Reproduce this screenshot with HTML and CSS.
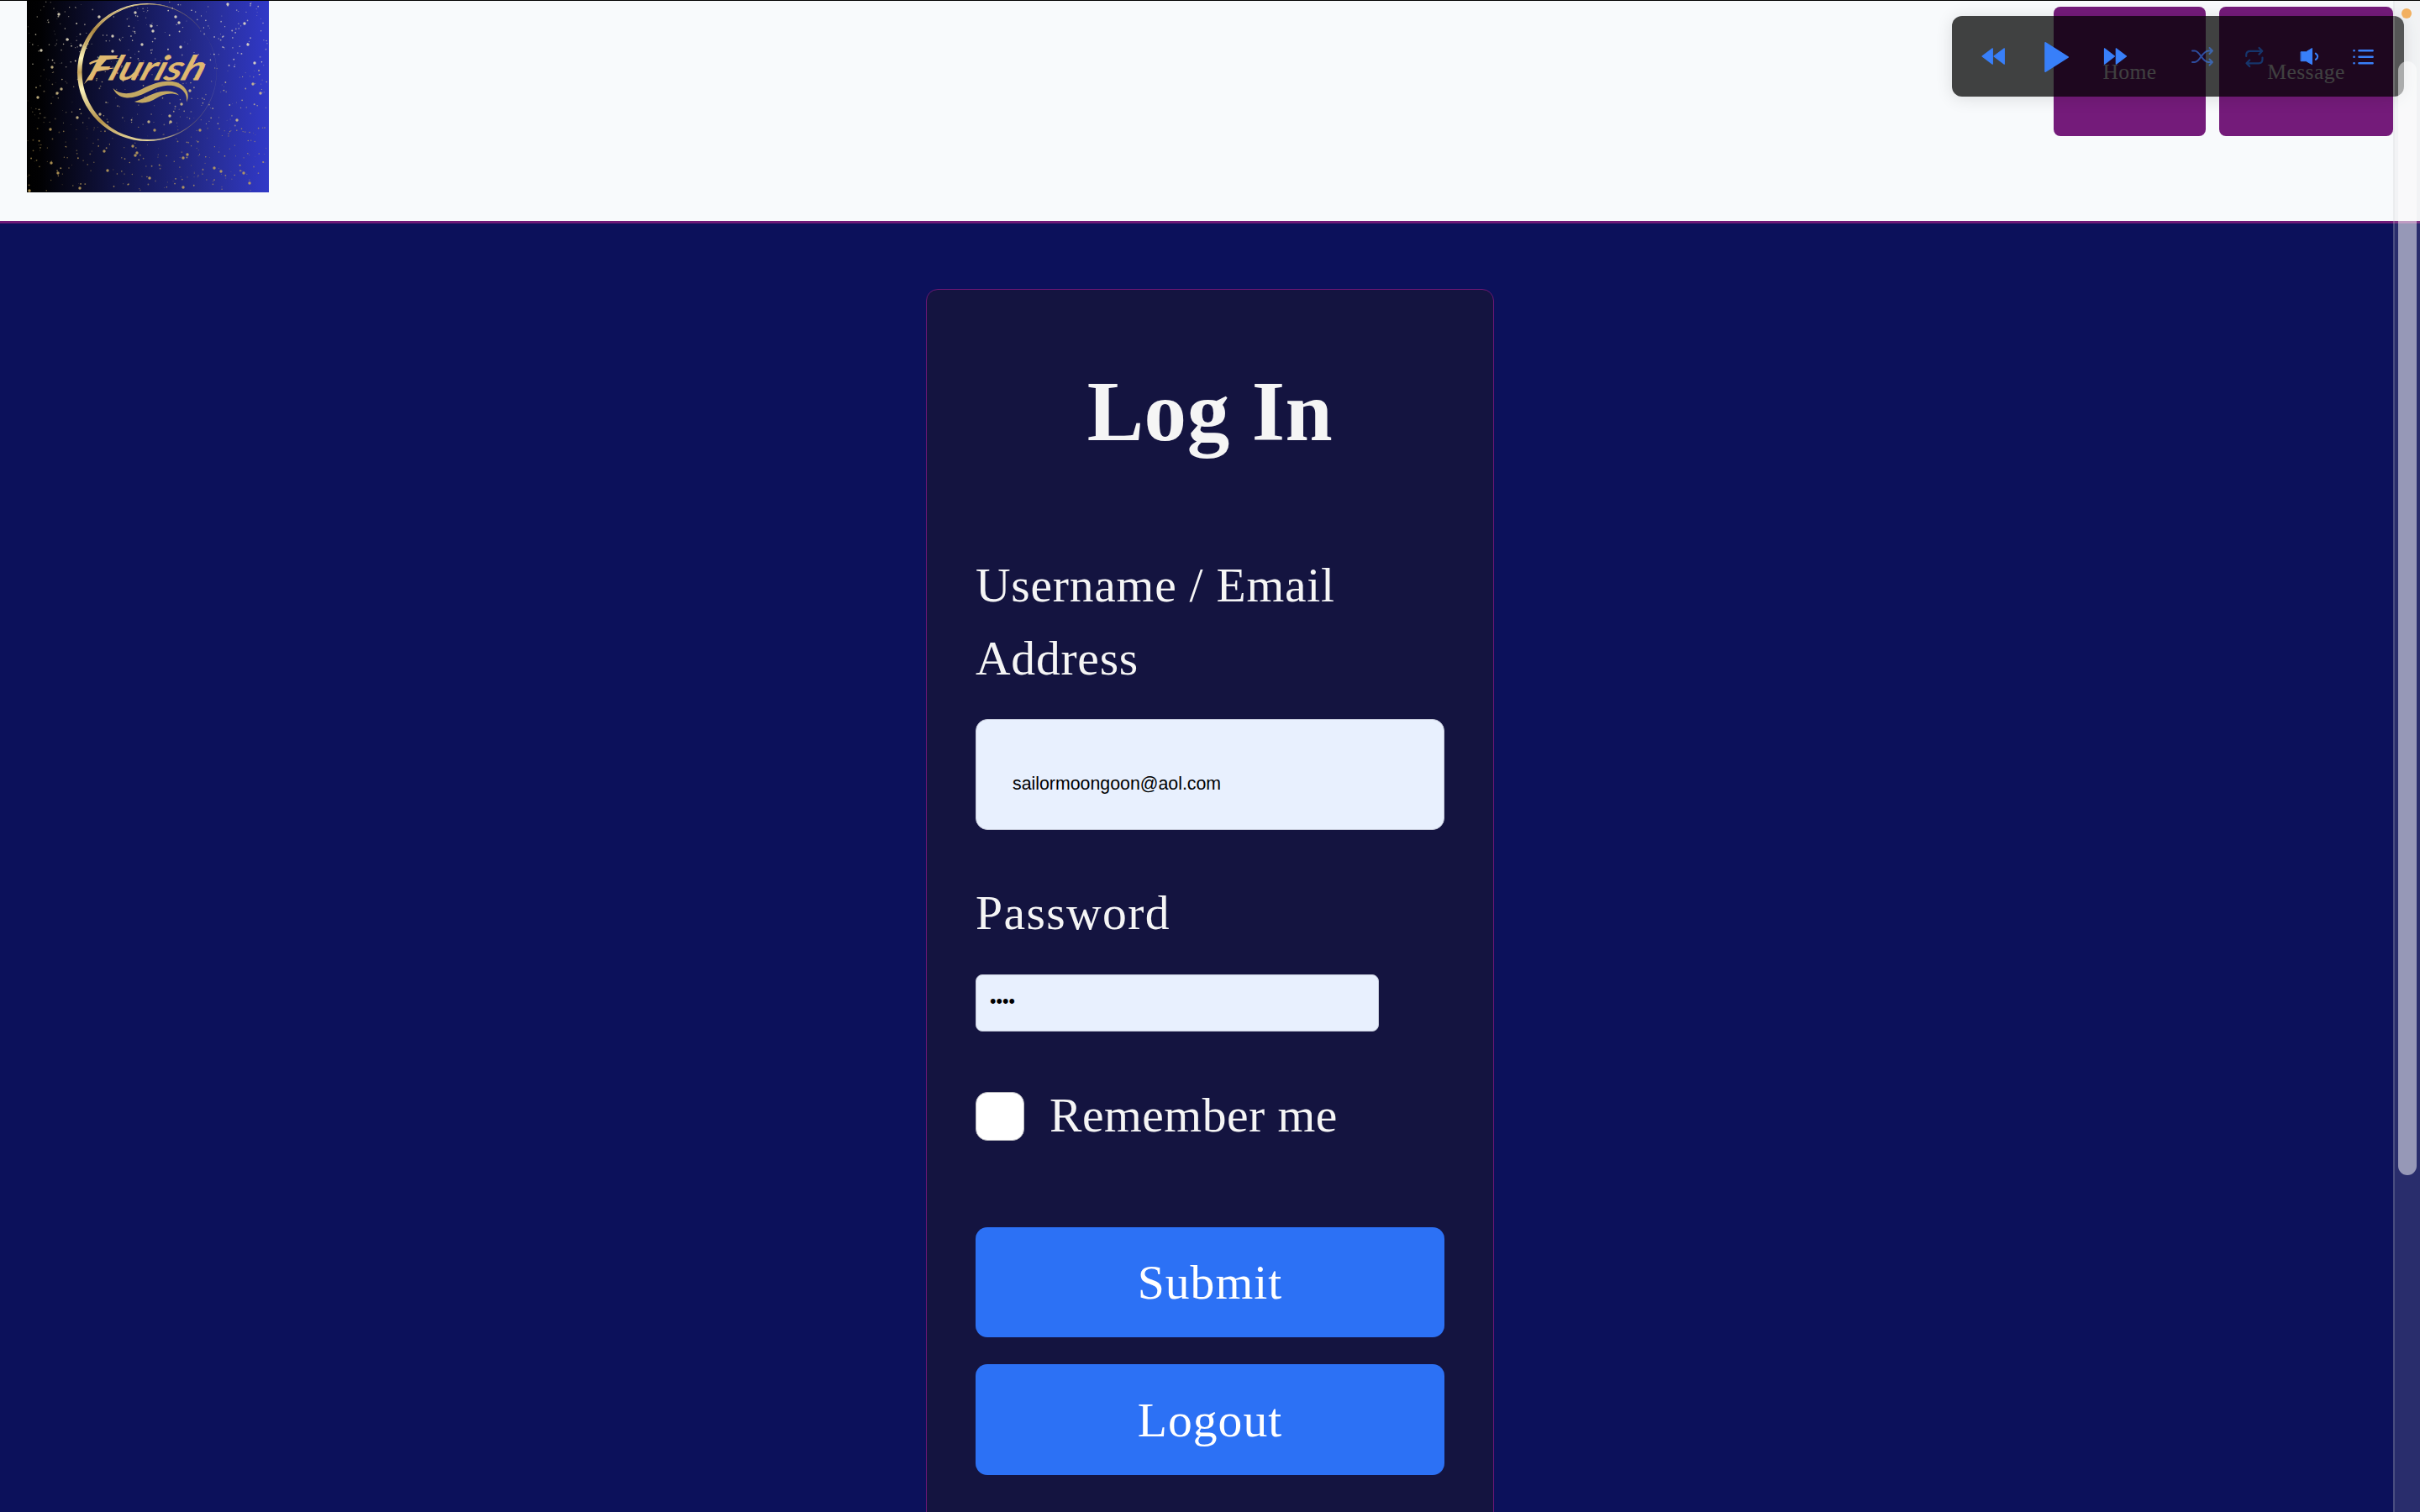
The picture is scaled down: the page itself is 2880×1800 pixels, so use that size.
FILE: index.html
```html
<!DOCTYPE html>
<html lang="en">
<head>
<meta charset="utf-8">
<title>Flurish - Log In</title>
<link rel="stylesheet" href="styles.css">
</head>
<body>
<header class="site-header">
  <svg class="logo" viewBox="32 1 288 228" role="img" aria-label="Flurish">
    <defs>
      <linearGradient id="night" x1="0" x2="1" y1="0" y2="0">
        <stop offset="0" stop-color="#000"/>
        <stop offset=".06" stop-color="#010103"/>
        <stop offset=".24" stop-color="#0b0c29"/>
        <stop offset=".5" stop-color="#171b60"/>
        <stop offset=".76" stop-color="#272d95"/>
        <stop offset="1" stop-color="#3139c8"/>
      </linearGradient>
      <linearGradient id="ring" gradientUnits="userSpaceOnUse" x1="0" x2="0" y1="3" y2="169">
        <stop offset="0" stop-color="#fff6c4"/>
        <stop offset=".2" stop-color="#a8823c"/>
        <stop offset=".4" stop-color="#fbf3b8"/>
        <stop offset=".5" stop-color="#c4a258"/>
        <stop offset=".62" stop-color="#fbf3bc"/>
        <stop offset=".85" stop-color="#b4924a"/>
        <stop offset="1" stop-color="#e8d9a0"/>
      </linearGradient>
      <linearGradient id="fade" gradientUnits="userSpaceOnUse" x1="90" x2="262" y1="0" y2="0">
        <stop offset=".5" stop-color="#fff"/>
        <stop offset=".75" stop-color="#777"/>
        <stop offset="1" stop-color="#111"/>
      </linearGradient>
      <mask id="fade-mask"><rect x="32" y="0" width="288" height="230" fill="url(#fade)"/></mask>
    </defs>
    <rect x="32" y="1" width="288" height="228" fill="url(#night)"/>
    <g id="stars"></g>
    <g mask="url(#fade-mask)">
      <path fill="url(#ring)" fill-rule="evenodd" d="M92 86a83 82 0 1 1 166 0a83 82 0 1 1-166 0zM97.5 85.5a80 80.5 0 1 0 160 0a80 80.5 0 1 0-160 0z"/>
      <path d="M101 55C112 25 142 5 177 5c25 0 47 11 61 29" fill="none" stroke="#b8985a" stroke-width=".8"/>
    </g>
    <text class="logo-text" transform="translate(102 95) skewX(-20)" textLength="138" lengthAdjust="spacingAndGlyphs">Flurish</text>
    <path fill="#e0b970" d="M100 100C106 89 113 80 122 71l5 0C119 79 110 91 100 100zM106 75c12-7 27-7 39-5c-12 0-27 1-38 7zM110 84c9-3 18-4 27-3c-8 2-17 3-26 5z"/>
    <path fill="#c3a863" d="M134.500 105C143 114 158 112 169 106C184 98 198 95 210 98C221 102 227 112 222 121.500C224 108 211 100 197 102C180 104 168 117 151 116.500C142 116 137 111 134.500 105zM160 121C173 118 181 109 197 108.500C206 108.500 211 110.500 213 113.500C203 109.500 194 112 186 117C178 122 170 124 160 121z"/>
  </svg>
  <nav class="nav">
    <a class="nav-link nav-home">Home</a>
    <a class="nav-link nav-message">Message</a>
  </nav>
</header>

<main class="card">
  <h1 class="title">Log In</h1>
  <form class="form">
    <label class="label" for="user">Username / Email Address</label>
    <input class="input input-user" id="user" type="text" value="sailormoongoon@aol.com">
    <label class="label label-password" for="pass">Password</label>
    <input class="input input-pass" id="pass" type="password" value="moon">
    <div class="remember">
      <input class="checkbox" id="remember" type="checkbox">
      <label class="label label-remember" for="remember">Remember me</label>
    </div>
    <button class="button button-submit" type="button">Submit</button>
    <button class="button button-logout" type="button">Logout</button>
  </form>
</main>

<div class="player">
  <svg class="icon rewind" width="28" height="40" viewBox="0 0 28 40"><path d="M1 20L13.300 10.800V29.200zM15 20L27.300 10.800V29.200z"/></svg>
  <svg class="icon play" width="29" height="40" viewBox="0 0 29 40"><path d="M1.200 4L28 21L1.200 38z"/></svg>
  <svg class="icon forward" width="28" height="40" viewBox="0 0 28 40"><path d="M1.500 10.800L13.500 20L1.500 29.200zM15.300 10.800L27.500 20L15.300 29.200z"/></svg>
  <svg class="icon shuffle" width="26" height="40" viewBox="0 0 26 40"><path d="M1 13.500H4C10 13.500 13 27 20 27H25M1 27H4C10 27 13 13.500 20 13.500H25M21.500 10L25 13.500L21.500 17M21.500 23.500L25 27L21.500 30.500"/></svg>
  <svg class="icon repeat" width="22" height="40" viewBox="0 0 22 40"><path d="M1.200 20V18.500Q1.200 13.800 6 13.800H20M16.500 10L20.300 13.800L16.500 17.600M20.500 21.500V23.500Q20.500 28.300 16 28.300H1.500M5.200 24.500L1.500 28.300L5.200 32.100"/></svg>
  <svg class="icon volume" width="22" height="40" viewBox="0 0 22 40"><path d="M.5 14.800H6.500L13.500 10.500V29.700L6.500 25.700H.5z"/><path class="wave" d="M17.800 16.600Q22.600 20.200 17.800 23.900"/></svg>
  <svg class="icon list" width="25" height="40" viewBox="0 0 25 40"><path d="M1.500 13.300h.1M1.500 20.800h.1M1.500 28.300h.1M7.500 13.300H23.600M7.500 20.800H23.600M7.500 28.300H23.600"/></svg>
</div>
<div class="scrollbar"><div class="thumb"></div></div>
<div class="dot"></div>
<script src="stars.js"></script>
</body>
</html>
```

FILE: styles.css
```css
* { box-sizing: border-box; }

body {
  margin: 0;
  height: 1800px;
  overflow: hidden;
  background: #0c115b;
  font-family: "Liberation Serif", serif;
  color: #f5f5f5;
}

.site-header {
  display: flex;
  justify-content: space-between;
  align-items: flex-start;
  height: 266px;
  padding: 0 32px;
  border-top: 1px solid #000;
  border-bottom: 3px solid #701a78;
  background: #f8fafc;
}

.logo { display: block; width: 288px; height: 228px; }

.logo-text {
  font: italic 500 40px Lato, sans-serif;
  fill: #e0b970;
  stroke: #e0b970;
  stroke-width: 0.8px;
}

.nav { display: flex; gap: 16px; padding-top: 7px; }

.nav-link {
  height: 154px;
  padding-top: 62px;
  border-radius: 8px;
  background: #741b7a;
  font-size: 25.6px;
  line-height: 32px;
  text-align: center;
}
.nav-home { width: 181px; letter-spacing: 0.4px; }
.nav-message { width: 207px; letter-spacing: 0.4px; }

.card {
  width: 676px;
  height: 1600px;
  margin: 78px auto 0 1102px;
  padding: 85px 58px 0;
  border: 1px solid #6b1775;
  border-radius: 14px;
  background: #141440;
}

.title {
  margin: 0 0 104.400px;
  font-size: 101px;
  line-height: 120px;
  letter-spacing: 0.6px;
  text-align: center;
}

.form { display: flex; flex-direction: column; }

.label {
  margin-bottom: 28.800px;
  font-size: 57.600px;
  line-height: 86.400px;
  letter-spacing: 0.75px;
}
.label-password { margin-top: 56.400px; letter-spacing: 1.4px; }

.input {
  border: 1px solid #c5cada;
  background: #e8f0fe;
  color: #000;
  font-family: "Liberation Sans", sans-serif;
  font-size: 21.330px;
  outline: none;
}
.input-user { height: 132px; padding: 23px 43px 0; border-radius: 14px; }
.input-pass { width: 480px; height: 68px; padding: 0 16px 2px; border-radius: 8px; }

.remember { display: flex; gap: 30px; margin-top: 57.400px; }
.checkbox {
  appearance: none;
  width: 58px;
  height: 58px;
  margin: 14.600px 0 0;
  border: 1px solid #b9b9bf;
  border-radius: 14px;
  background: #fff;
}
.label-remember { margin: 0; letter-spacing: 0.5px; }

.button {
  height: 131px;
  padding: 0;
  border: 0;
  border-radius: 14px;
  background: #2c71f5;
  color: #fff;
  font: 57.600px/86.400px "Liberation Serif", serif;
  letter-spacing: 1px;
}
.button-submit { margin-top: 90px; }
.button-logout { height: 132px; margin-top: 32px; padding-top: 1px; }

.player {
  position: absolute;
  left: 2323px;
  top: 19px;
  display: flex;
  width: 538px;
  height: 96px;
  padding: 28px 0 0 35px;
  border-radius: 12px;
  background: rgba(0, 0, 0, 0.74);
  box-shadow: 0 2px 20px rgba(0, 0, 0, 0.12);
}

.icon {
  flex: none;
  overflow: visible;
  fill: #387ff9;
  stroke: #387ff9;
  stroke-width: 1.2;
  stroke-linejoin: round;
  stroke-linecap: round;
}
.play { margin-left: 47px; stroke-width: 2; }
.forward { margin-left: 41px; }
.shuffle { margin-left: 77px; fill: none; stroke-width: 2; opacity: 0.58; }
.repeat { margin-left: 38px; fill: none; stroke: #16356b; stroke-width: 2.200; }
.volume { margin-left: 44px; stroke-width: 1; }
.wave { fill: none; stroke-width: 2; }
.list { margin-left: 40px; fill: none; stroke-width: 2.600; }

.scrollbar {
  position: absolute;
  right: 0;
  top: 1px;
  width: 32px;
  height: 1799px;
  padding: 72px 4px 0;
  border-left: 2px solid rgba(212, 212, 212, 0.2);
  background: rgba(205, 205, 205, 0.15);
}
.thumb {
  width: 22px;
  height: 1326px;
  border-radius: 11px;
  background: rgba(255, 255, 255, 0.51);
}

.dot {
  position: absolute;
  left: 2858px;
  top: 10px;
  width: 12px;
  height: 12px;
  border-radius: 50%;
  background: #f2b060;
}
```

FILE: stars.js
```js
// Scatters gold dust over the logo's night sky; the seed keeps it the same on every load.
const sky = document.getElementById('stars');
let seed = 7;
const random = () => {
  seed = (seed * 16807) % 2147483647;
  return seed / 2147483647;
};
const star = (x, y, r, opacity) => {
  const dot = document.createElementNS('http://www.w3.org/2000/svg', 'circle');
  dot.setAttribute('cx', x);
  dot.setAttribute('cy', y);
  dot.setAttribute('r', r);
  dot.setAttribute('fill', y < 80 ? '#efe5c8' : y < 150 ? '#d8c48c' : '#c4a45c');
  dot.setAttribute('opacity', opacity);
  sky.appendChild(dot);
};
for (let i = 0; i < 620; i++) {
  star(33 + random() * 286, 2 + random() * 226, 0.4 + random() * 0.6, 0.3 + random() * 0.5);
}
const bright = [
  [70, 17], [118, 20], [161, 15], [209, 20], [271, 5], [291, 28], [213, 27], [180, 31],
  [182, 37], [134, 43], [134, 61], [169, 53], [215, 56], [295, 53], [80, 47], [49, 60],
  [62, 80], [96, 54], [303, 75], [301, 100], [310, 111], [73, 106], [68, 111], [45, 116],
  [92, 140], [60, 154], [119, 136], [177, 145], [203, 145], [216, 124], [226, 108],
  [184, 155], [238, 155], [282, 143], [158, 174], [124, 180], [163, 182], [161, 185],
  [223, 184], [218, 188], [61, 194], [69, 206], [128, 203], [178, 212], [263, 204],
  [255, 200], [290, 206], [297, 218], [218, 223], [95, 224], [35, 227], [202, 138]
];
bright.forEach(([x, y]) => star(x, y, 1.7, 0.85));
```
